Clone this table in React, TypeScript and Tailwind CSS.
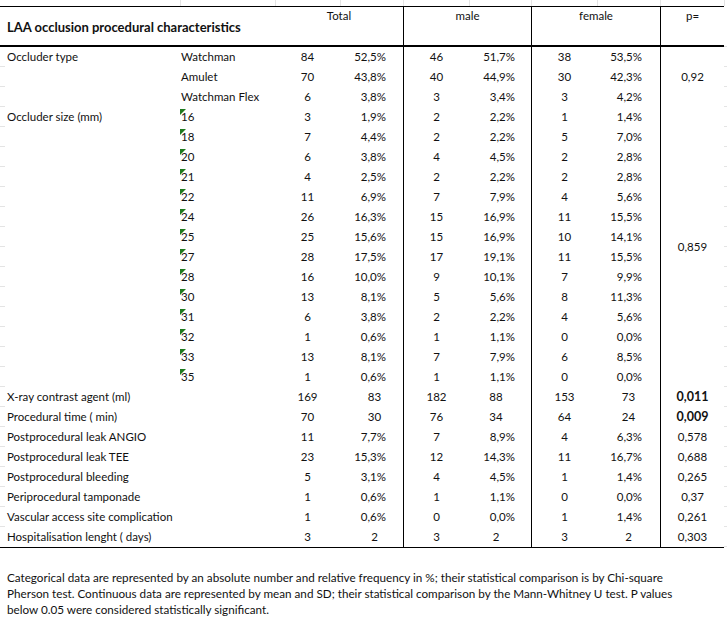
import React from 'react'

type Row = {
  label?: string
  sub?: string
  tri?: boolean
  t: string
  tp: string
  m: string
  mp: string
  f: string
  fp: string
  mean?: boolean
}

const rows: Row[] = [
  { label: 'Occluder type', sub: 'Watchman', t: '84', tp: '52,5%', m: '46', mp: '51,7%', f: '38', fp: '53,5%' },
  { sub: 'Amulet', t: '70', tp: '43,8%', m: '40', mp: '44,9%', f: '30', fp: '42,3%' },
  { sub: 'Watchman Flex', t: '6', tp: '3,8%', m: '3', mp: '3,4%', f: '3', fp: '4,2%' },
  { label: 'Occluder size (mm)', sub: '16', tri: true, t: '3', tp: '1,9%', m: '2', mp: '2,2%', f: '1', fp: '1,4%' },
  { sub: '18', tri: true, t: '7', tp: '4,4%', m: '2', mp: '2,2%', f: '5', fp: '7,0%' },
  { sub: '20', tri: true, t: '6', tp: '3,8%', m: '4', mp: '4,5%', f: '2', fp: '2,8%' },
  { sub: '21', tri: true, t: '4', tp: '2,5%', m: '2', mp: '2,2%', f: '2', fp: '2,8%' },
  { sub: '22', tri: true, t: '11', tp: '6,9%', m: '7', mp: '7,9%', f: '4', fp: '5,6%' },
  { sub: '24', tri: true, t: '26', tp: '16,3%', m: '15', mp: '16,9%', f: '11', fp: '15,5%' },
  { sub: '25', tri: true, t: '25', tp: '15,6%', m: '15', mp: '16,9%', f: '10', fp: '14,1%' },
  { sub: '27', tri: true, t: '28', tp: '17,5%', m: '17', mp: '19,1%', f: '11', fp: '15,5%' },
  { sub: '28', tri: true, t: '16', tp: '10,0%', m: '9', mp: '10,1%', f: '7', fp: '9,9%' },
  { sub: '30', tri: true, t: '13', tp: '8,1%', m: '5', mp: '5,6%', f: '8', fp: '11,3%' },
  { sub: '31', tri: true, t: '6', tp: '3,8%', m: '2', mp: '2,2%', f: '4', fp: '5,6%' },
  { sub: '32', tri: true, t: '1', tp: '0,6%', m: '1', mp: '1,1%', f: '0', fp: '0,0%' },
  { sub: '33', tri: true, t: '13', tp: '8,1%', m: '7', mp: '7,9%', f: '6', fp: '8,5%' },
  { sub: '35', tri: true, t: '1', tp: '0,6%', m: '1', mp: '1,1%', f: '0', fp: '0,0%' },
  { label: 'X-ray contrast agent (ml)', t: '169', tp: '83', m: '182', mp: '88', f: '153', fp: '73', mean: true },
  { label: 'Procedural time ( min)', t: '70', tp: '30', m: '76', mp: '34', f: '64', fp: '24', mean: true },
  { label: 'Postprocedural leak ANGIO', t: '11', tp: '7,7%', m: '7', mp: '8,9%', f: '4', fp: '6,3%' },
  { label: 'Postprocedural leak TEE', t: '23', tp: '15,3%', m: '12', mp: '14,3%', f: '11', fp: '16,7%' },
  { label: 'Postprocedural bleeding', t: '5', tp: '3,1%', m: '4', mp: '4,5%', f: '1', fp: '1,4%' },
  { label: 'Periprocedural tamponade', t: '1', tp: '0,6%', m: '1', mp: '1,1%', f: '0', fp: '0,0%' },
  { label: 'Vascular access site complication', t: '1', tp: '0,6%', m: '0', mp: '0,0%', f: '1', fp: '1,4%' },
  { label: 'Hospitalisation lenght ( days)', t: '3', tp: '2', m: '3', mp: '2', f: '3', fp: '2', mean: true },
]

// single p values for the rows after the merged blocks
const pSingles = [
  { v: '0,011', bold: true },
  { v: '0,009', bold: true },
  { v: '0,578' },
  { v: '0,688' },
  { v: '0,265' },
  { v: '0,37' },
  { v: '0,261' },
  { v: '0,303' },
]

const cols = 'grid grid-cols-[5px_175px_95px_65px_63px_66px_62px_66px_63px]'

function DataRow({ row, last }: { row: Row; last: boolean }) {
  return (
    <div className={`${cols} h-[20px] items-center`}>
      <div className={`h-full ${last ? '' : 'border-b border-[#e4e4e4]'}`} />
      <div className="pl-[2px] whitespace-nowrap">{row.label}</div>
      <div className="relative h-full flex items-center pl-[1px] whitespace-nowrap">
        {row.tri && (
          <span className="absolute left-0 top-[2px] w-0 h-0 border-t-[6px] border-r-[6px] border-t-[#1f7a1f] border-r-transparent" />
        )}
        {row.sub}
      </div>
      <div className="text-center">{row.t}</div>
      <div className={row.mean ? 'text-center pl-[6px]' : 'text-right pr-[17px]'}>{row.tp}</div>
      <div className="h-full flex items-center justify-center border-l border-black">{row.m}</div>
      <div className={row.mean ? 'text-center pr-[8px]' : 'text-right pr-[16px]'}>{row.mp}</div>
      <div className="h-full flex items-center justify-center border-l border-black">{row.f}</div>
      <div className={row.mean ? 'text-center' : 'text-right pr-[18px]'}>{row.fp}</div>
    </div>
  )
}

export default function App() {
  return (
    <div
      className="w-[727px] h-[619px] bg-white text-[#111] text-[11.5px] leading-[16px] overflow-hidden"
      style={{ fontFamily: 'Lato, "Open Sans", sans-serif' }}
    >
      {/* faint sheet gridlines above the table */}
      <div className="grid grid-cols-[180px_95px_65px_63px_66px_62px_66px_63px_64px_3px] h-[6px]">
        <div />
        <div className="border-l border-[#e4e4e4]" />
        <div className="border-l border-[#e4e4e4]" />
        <div className="border-l border-[#e4e4e4]" />
        <div className="border-l border-[#e4e4e4]" />
        <div className="border-l border-[#e4e4e4]" />
        <div className="border-l border-[#e4e4e4]" />
        <div className="border-l border-[#e4e4e4]" />
        <div className="border-l border-[#e4e4e4]" />
        <div className="border-l border-[#e4e4e4]" />
      </div>

      <div className="flex">
        <div className="w-[724px] border-t border-b border-black">
          {/* header */}
          <div className="grid grid-cols-[275px_128px_128px_129px_64px] h-[40px] border-b-2 border-black">
            <div className="pl-[7px] pt-[12px] font-bold text-[13px] whitespace-nowrap">
              LAA occlusion procedural characteristics
            </div>
            <div className="text-center pt-[1px]">Total</div>
            <div className="text-center pt-[1px] border-l border-black">male</div>
            <div className="text-center pt-[1px] border-l border-black">female</div>
            <div className="text-center pt-[1px] border-l border-black">p=</div>
          </div>

          {/* body */}
          <div className="flex">
            <div className="w-[660px]">
              {rows.map((r, i) => (
                <DataRow key={i} row={r} last={i === rows.length - 1} />
              ))}
            </div>
            <div className="w-[64px] border-l border-black flex flex-col">
              <div className="h-[60px] flex items-center justify-center">0,92</div>
              <div className="h-[280px] flex items-center justify-center">0,859</div>
              {pSingles.map((p, i) => (
                <div
                  key={i}
                  className={`h-[20px] flex items-center justify-center ${p.bold ? 'font-bold text-[12.5px]' : ''}`}
                >
                  {p.v}
                </div>
              ))}
            </div>
          </div>
        </div>

        {/* faint gridline ticks on the right edge */}
        <div className="w-[3px] flex flex-col">
          <div className="h-[41px] border-b border-[#e4e4e4]" />
          {rows.map((_, i) => (
            <div key={i} className="h-[20px] border-b border-[#e4e4e4]" />
          ))}
        </div>
      </div>

      <p className="mt-[21px] pl-[7px] whitespace-nowrap text-[11.7px]">
        Categorical data are represented by an absolute number and relative frequency in %; their statistical comparison is by Chi-square
        <br />
        Pherson test. Continuous data are represented by mean and SD; their statistical comparison by the Mann-Whitney U test. P values
        <br />
        below 0.05 were considered statistically significant.
      </p>
    </div>
  )
}
